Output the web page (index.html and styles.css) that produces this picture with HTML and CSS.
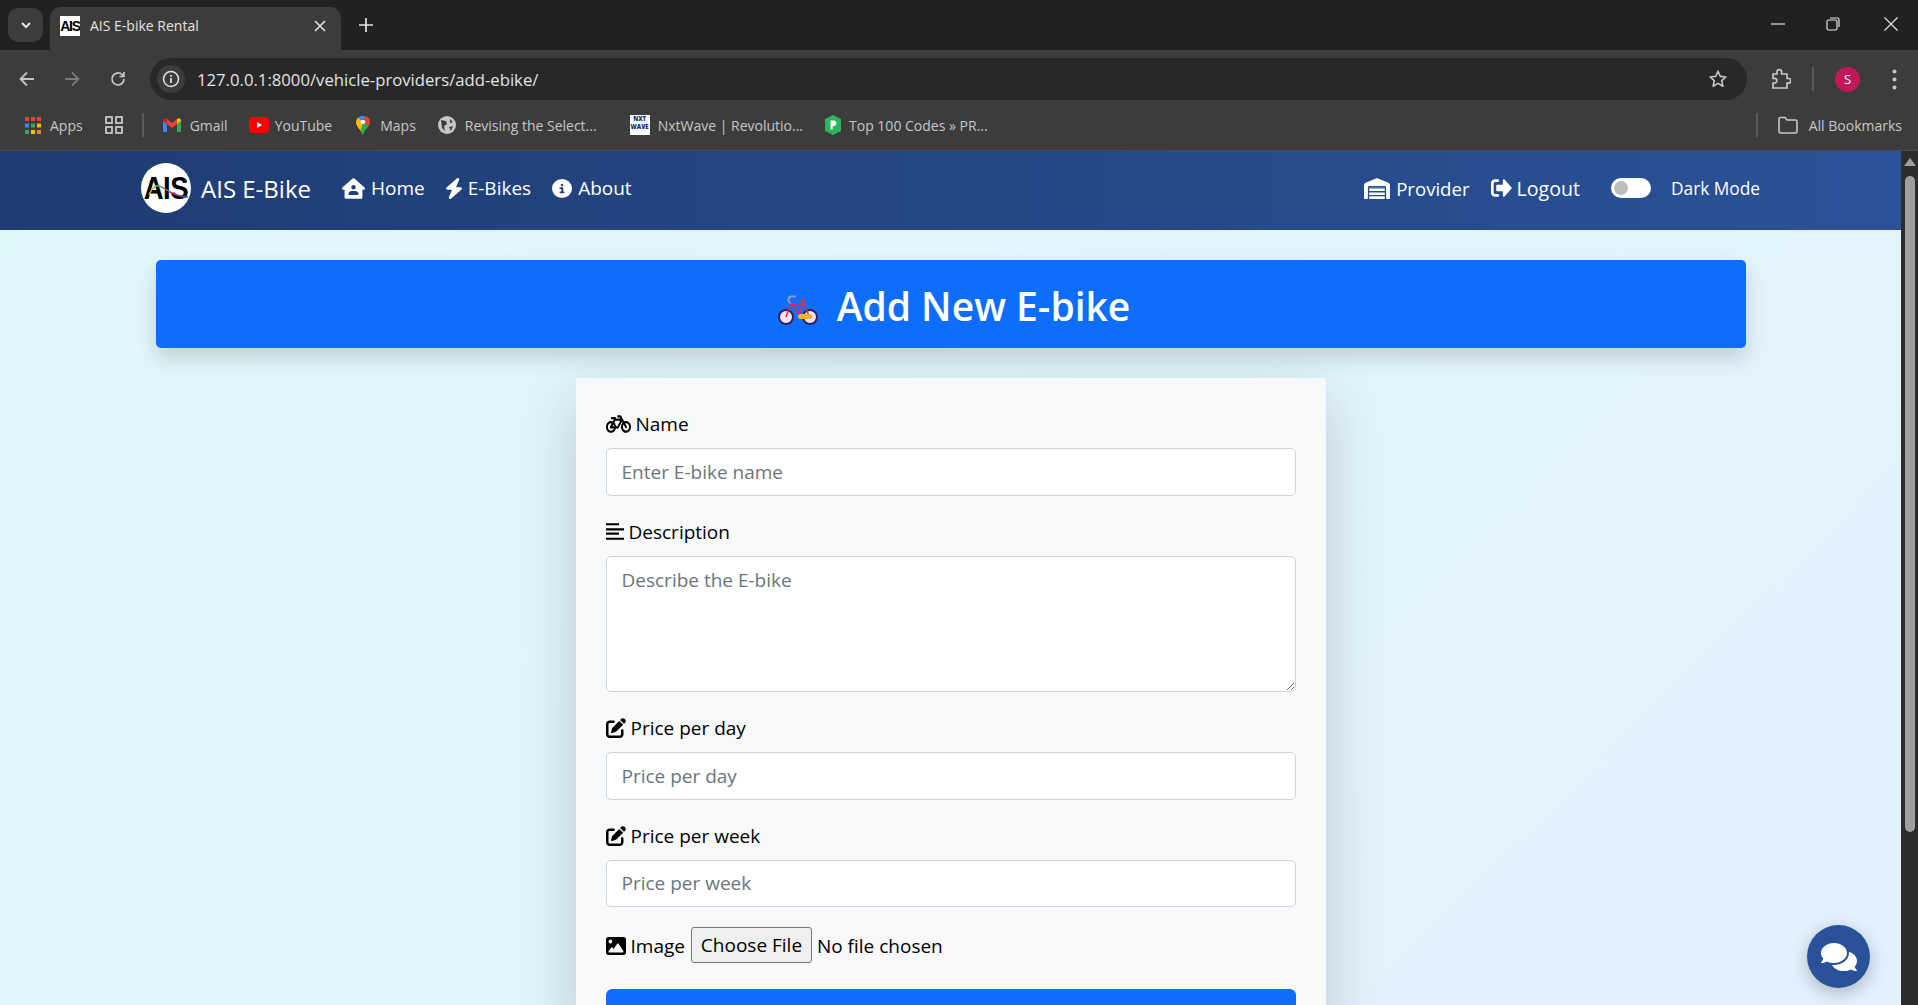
FILE: index.html
```html
<!DOCTYPE html>
<html lang="en">
<head>
    <meta charset="UTF-8">
    <meta name="viewport" content="width=device-width, initial-scale=1.0">
    <title>AIS E-bike Rental</title>
    <link rel="stylesheet" href="styles.css">
</head>
<body>
    <!-- browser chrome -->
    <div class="tabstrip">
        <div class="tab-search"><svg width="14" height="14" viewBox="0 0 14 14"><path d="M3 5l4 4 4-4" fill="none" stroke="#e3e3e3" stroke-width="2"/></svg></div>
        <div class="tab">
            <span class="favicon">AIS</span>
            <span class="tab-title">AIS E-bike Rental</span>
            <svg class="tab-close" width="14" height="14" viewBox="0 0 14 14"><path d="M2 2l10 10M12 2L2 12" stroke="#e3e3e3" stroke-width="1.6"/></svg>
        </div>
        <svg class="tab-new" width="16" height="16" viewBox="0 0 16 16"><path d="M8 1v14M1 8h14" stroke="#e3e3e3" stroke-width="1.7"/></svg>
        <div class="window-btns">
            <svg width="14" height="14" viewBox="0 0 14 14"><path d="M0 7h14" stroke="#e3e3e3" stroke-width="1.2"/></svg>
            <svg width="14" height="14" viewBox="0 0 14 14"><rect x="1" y="3" width="10" height="10" rx="1.5" fill="none" stroke="#e3e3e3" stroke-width="1.2"/><path d="M4 1h7.5A1.5 1.5 0 0 1 13 2.500V10" fill="none" stroke="#e3e3e3" stroke-width="1.2"/></svg>
            <svg class="win-close" width="14" height="14" viewBox="0 0 14 14"><path d="M0.500 0.500l13 13M13.500 0.500l-13 13" stroke="#e3e3e3" stroke-width="1.2"/></svg>
        </div>
    </div>

    <div class="toolbar">
        <svg class="tool-back" width="18" height="18" viewBox="0 0 18 18"><path d="M16 9H3M9 2.500L2.500 9 9 15.500" fill="none" stroke="#c7c7c7" stroke-width="1.8"/></svg>
        <svg class="tool-forward" width="18" height="18" viewBox="0 0 18 18"><path d="M2 9h13M9 2.500L15.500 9 9 15.500" fill="none" stroke="#7a7a7a" stroke-width="1.8"/></svg>
        <svg class="tool-reload" width="18" height="18" viewBox="0 0 18 18"><path d="M15 9a6 6 0 1 1-1.800-4.300L15 6.500M15 2v4.500h-4.500" fill="none" stroke="#c7c7c7" stroke-width="1.7"/></svg>
        <div class="omnibox">
            <div class="site-info"><svg width="18" height="18" viewBox="0 0 18 18"><circle cx="9" cy="9" r="7.500" fill="none" stroke="#e3e3e3" stroke-width="1.500"/><path d="M9 8v5M9 5v1.800" stroke="#e3e3e3" stroke-width="1.700"/></svg></div>
            <span class="url">127.0.0.1:8000/vehicle-providers/add-ebike/</span>
            <svg class="star" width="20" height="20" viewBox="0 0 20 20"><path d="M10 2.200l2.300 5.200 5.600.6-4.200 3.700 1.200 5.500L10 14.400l-4.900 2.800 1.200-5.500L2.100 8l5.600-.6z" fill="none" stroke="#c7c7c7" stroke-width="1.600" stroke-linejoin="round"/></svg>
        </div>
        <svg class="puzzle" width="20" height="22" viewBox="0 0 20 22"><path d="M2 6h4V4a2.300 2.300 0 0 1 4.600 0v2H16v4.500h1.500a2.300 2.300 0 0 1 0 4.600H16V20H2v-5h1.500a2.300 2.300 0 0 0 0-4.600H2z" fill="none" stroke="#c7c7c7" stroke-width="1.700" stroke-linejoin="round"/></svg>
        <span class="tool-sep"></span>
        <span class="avatar">S</span>
        <svg class="dots" width="5" height="21" viewBox="0 0 5 21"><circle cx="2.500" cy="2.500" r="2" fill="#c7c7c7"/><circle cx="2.500" cy="10.500" r="2" fill="#c7c7c7"/><circle cx="2.500" cy="18.500" r="2" fill="#c7c7c7"/></svg>
    </div>

    <div class="bookmarks">
        <a class="bm bm-apps">
            <svg width="16" height="17" viewBox="0 0 16 17">
                <rect width="4" height="4" fill="#ea4335"/><rect x="6" width="4" height="4" fill="#ea4335"/><rect x="12" width="4" height="4" fill="#ea4335"/>
                <rect y="6.500" width="4" height="4" fill="#4285f4"/><rect x="6" y="6.500" width="4" height="4" fill="#34a853"/><rect x="12" y="6.500" width="4" height="4" fill="#fbbc04"/>
                <rect y="13" width="4" height="4" fill="#34a853"/><rect x="6" y="13" width="4" height="4" fill="#fbbc04"/><rect x="12" y="13" width="4" height="4" fill="#ea8600"/>
            </svg>
            Apps
        </a>
        <svg class="bm-tabs" width="18" height="18" viewBox="0 0 18 18" fill="none" stroke="#c7c7c7" stroke-width="1.800"><rect x="1" y="1" width="6" height="6"/><rect x="11" y="1" width="6" height="6"/><rect x="1" y="11" width="6" height="6"/><rect x="11" y="11" width="6" height="6"/></svg>
        <span class="bm-sep"></span>
        <a class="bm bm-gmail">
            <svg width="18" height="16" viewBox="0 0 18 16"><path d="M0 3v11a1 1 0 0 0 1 1h3V6z" fill="#4285f4"/><path d="M18 3v11a1 1 0 0 1-1 1h-3V6z" fill="#34a853"/><path d="M4 7V2L9 6l5-4v5L9 11z" fill="#ea4335"/><path d="M0 3a2 2 0 0 1 3-1.500L4 2v5L0 4z" fill="#c5221f"/><path d="M18 3a2 2 0 0 0-3-1.500L14 2v5l4-3z" fill="#fbbc04"/></svg>
            Gmail
        </a>
        <a class="bm bm-yt">
            <svg width="20" height="16" viewBox="0 0 20 16"><rect width="20" height="16" rx="4" fill="#f00"/><path d="M8 5l5 3-5 3z" fill="#fff"/></svg>
            YouTube
        </a>
        <a class="bm bm-maps">
            <svg width="14" height="19" viewBox="0 0 15 24" preserveAspectRatio="none"><path d="M7.500 24C6 18 0 14 0 7.500A7.500 7.500 0 0 1 2.300 2L7.500 7.500z" fill="#fbbc04"/><path d="M2.300 2A7.500 7.500 0 0 1 10 .4L7.500 7.500z" fill="#4285f4"/><path d="M10 .4A7.500 7.500 0 0 1 15 7.500c0 2-.6 3.600-1.500 5.200L7.500 7.500z" fill="#ea4335"/><path d="M13.500 12.700C11.500 16 8.500 19 7.500 24c-.5-2-1.500-4-2.600-5.600L7.500 7.500z" fill="#34a853"/><circle cx="7.500" cy="7.500" r="2.600" fill="#fff"/></svg>
            Maps
        </a>
        <a class="bm bm-globe">
            <svg width="18" height="18" viewBox="0 0 18 18"><circle cx="9" cy="9" r="9" fill="#c7c7c7"/><path d="M3 4l5 1 1 3-3 2 1 5-3-3zM12 3l3 3-3 1zM11 11l4-1-2 5z" fill="#3c3c3c"/></svg>
            Revising the Select...
        </a>
        <a class="bm bm-nxt">
            <span class="nxt-icon">NXT<br>WAVE</span>
            NxtWave | Revolutio...
        </a>
        <a class="bm bm-top">
            <svg width="18" height="20" viewBox="0 0 18 20"><path d="M9 0l8 4v12l-8 4-8-4V4z" fill="#2cb55d"/><path d="M6.500 5.500h3a2.800 2.800 0 0 1 0 5.600h-.8v3.400H6.500z" fill="#fff"/></svg>
            Top 100 Codes » PR...
        </a>
        <span class="bm-sep bm-sep-right"></span>
        <a class="bm bm-all">
            <svg width="20" height="18" viewBox="0 0 20 18"><path d="M1 3a1.500 1.500 0 0 1 1.500-1.500H7L9 4h8.500A1.500 1.500 0 0 1 19 5.500v10a1.500 1.500 0 0 1-1.500 1.500h-15A1.500 1.500 0 0 1 1 15.500z" fill="none" stroke="#c7c7c7" stroke-width="1.600"/></svg>
            All Bookmarks
        </a>
    </div>

    <!-- page -->
    <div class="viewport">
        <div class="page">
            <nav class="navbar">
                <div class="nav-left">
                    <a class="brand">
                        <span class="logo">
                            <span class="logo-text">AIS</span>
                            <svg class="logo-swoosh" viewBox="0 0 50 50"><path d="M8 32C11 25 14 22 18 23s7 4 11 6 11 5 18 5" fill="none" stroke="url(#swoosh)" stroke-width="1.500"/><defs><linearGradient id="swoosh"><stop offset="0" stop-color="#f5c400"/><stop offset=".3" stop-color="#35a84a"/><stop offset=".6" stop-color="#d5267b"/><stop offset="1" stop-color="#2b5fb8"/></linearGradient></defs></svg>
                        </span>
                        AIS E-Bike
                    </a>
                    <a class="nav-link">
                        <svg class="ico" width="23" height="21" viewBox="0 0 576 512"><path fill-rule="evenodd" fill="#fff" d="M266 8c13-11 31-11 44 0l255 223c8 7 11 15 11 24 0 18-15 33-32 33h-32v184c0 22-18 40-40 40H104c-22 0-40-18-40-40V288H32c-18 0-32-15-32-33 0-9 3-17 10-24zM288 170a56 56 0 1 0 0 112 56 56 0 1 0 0-112zM240 320c-44 0-80 36-80 80 0 9 7 16 16 16h224c9 0 16-7 16-16 0-44-36-80-80-80z"/></svg>
                        Home
                    </a>
                    <a class="nav-link">
                        <svg class="ico" width="16" height="21" viewBox="30 0 388 512" preserveAspectRatio="none"><path fill="#fff" d="M349.400 44.600c5.900-13.700 1.500-29.700-10.600-38.500s-28.600-8.100-39.900 1.800l-256 224c-10 8.800-13.600 22.900-8.900 35.300S50.700 288 64 288H175.500L98.600 467.400c-5.900 13.700-1.500 29.700 10.600 38.500s28.600 8.100 39.900-1.800l256-224c10-8.800 13.600-22.900 8.900-35.300s-16.600-20.700-30-20.700H272.500L349.400 44.600z"/></svg>
                        E-Bikes
                    </a>
                    <a class="nav-link">
                        <svg class="ico" width="20" height="19" viewBox="0 0 512 512" preserveAspectRatio="none"><path fill="#fff" d="M256 512A256 256 0 1 0 256 0a256 256 0 1 0 0 512zM216 336h24V272H216c-13.300 0-24-10.700-24-24s10.700-24 24-24h48c13.300 0 24 10.700 24 24v88h8c13.300 0 24 10.700 24 24s-10.700 24-24 24H216c-13.300 0-24-10.700-24-24s10.700-24 24-24zm40-208a32 32 0 1 1 0 64 32 32 0 1 1 0-64z"/></svg>
                        About
                    </a>
                </div>
                <div class="nav-right">
                    <a class="nav-link nav-provider">
                        <svg class="ico" width="26" height="21" viewBox="0 0 640 512"><path fill="#fff" d="M0 488V171.300c0-26.200 15.900-49.700 40.200-59.400L308.100 4.800c7.600-3.100 16.100-3.100 23.800 0L599.800 111.900c24.300 9.700 40.200 33.300 40.200 59.400V488c0 13.300-10.700 24-24 24H568c-13.300 0-24-10.700-24-24V224c0-17.700-14.300-32-32-32H128c-17.700 0-32 14.300-32 32V488c0 13.300-10.700 24-24 24H24c-13.300 0-24-10.700-24-24zm488 24H152c-13.300 0-24-10.700-24-24V448H512v40c0 13.300-10.700 24-24 24zM128 416V352H512v64H128zm0-96V256H512v64H128zm0-96v-8H512v8H128z"/></svg>
                        Provider
                    </a>
                    <a class="nav-link nav-logout">
                        <svg class="ico" width="21" height="18" viewBox="0 60 512 392" preserveAspectRatio="none"><path fill="#fff" d="M497 273L329 441c-15 15-41 4.500-41-17v-96H152c-13.300 0-24-10.700-24-24v-96c0-13.300 10.700-24 24-24h136V88c0-21.400 25.900-32 41-17l168 168c9.300 9.400 9.300 24.600 0 34zM192 436v-40c0-6.600-5.400-12-12-12H96c-17.700 0-32-14.300-32-32V160c0-17.700 14.300-32 32-32h84c6.600 0 12-5.400 12-12V76c0-6.600-5.400-12-12-12H96c-53 0-96 43-96 96v192c0 53 43 96 96 96h84c6.600 0 12-5.400 12-12z"/></svg>
                        Logout
                    </a>
                    <span class="switch"><span class="knob"></span></span>
                    <span class="nav-link nav-dark">Dark Mode</span>
                </div>
            </nav>

            <h2 class="banner">
                <svg class="banner-bike" width="40" height="30" viewBox="0 0 40 30">
                    <circle cx="8" cy="22" r="7" fill="#f6e6f2" stroke="#3b1d5c" stroke-width="2"/>
                    <circle cx="32" cy="22" r="7" fill="#f6e6f2" stroke="#3b1d5c" stroke-width="2"/>
                    <path d="M8 22L13 8l9 13M13 9L25 9M25 6L21 21M25 6l6 15" fill="none" stroke="#e8264f" stroke-width="1.500"/>
                    <path d="M13 8C9 7 10 2 13 1.500h5" fill="none" stroke="#8f96c8" stroke-width="1.800"/>
                    <rect x="22" y="4" width="6" height="3" rx="1.500" fill="#8a5a44"/>
                    <rect x="20" y="19" width="14" height="5" rx="2.500" fill="#fbb03b"/>
                </svg>
                Add New E-bike
            </h2>

            <form class="ebike-form">
                <div class="field">
                    <label class="field-label">
                        <svg class="ico" width="25" height="18" viewBox="0 60 640 392" preserveAspectRatio="none"><path d="M512.509 192.001c-16.373-.064-32.030 2.955-46.436 8.495l-77.680-125.153A24 24 0 0 0 368.001 64h-64c-8.837 0-16 7.163-16 16v16c0 8.837 7.163 16 16 16h50.649l14.896 24H256.002v-16c0-8.837-7.163-16-16-16h-87.459c-13.441 0-24.777 10.999-24.536 24.437.232 13.044 10.876 23.563 23.995 23.563h48.726l-29.417 47.520c-13.433-4.830-27.904-7.483-42.992-7.520C58.094 191.830.412 249.012.002 319.236-.413 390.279 57.055 448 128.002 448c59.642 0 109.758-40.793 123.967-96h52.033a24 24 0 0 0 20.406-11.367L410.370 201.770l14.938 24.067c-25.455 23.448-41.385 57.081-41.307 94.437.145 68.833 57.899 127.051 126.729 127.719 70.606.685 128.181-55.803 129.255-125.996 1.086-70.941-56.526-129.720-127.476-129.996zM186.750 265.772c9.727 10.529 16.673 23.661 19.642 38.228h-43.306l23.664-38.228zM128.002 400c-44.112 0-80-35.888-80-80s35.888-80 80-80c5.869 0 11.586.653 17.099 1.859l-45.505 73.509C89.715 331.327 101.213 352 120.002 352h81.300c-12.370 28.225-40.562 48-73.300 48zm162.630-96h-35.624c-3.960-31.756-19.556-59.894-42.383-80.026L237.371 184h127.547l-74.286 120zm217.057 95.886c-41.036-2.165-74.049-35.692-75.627-76.755-.812-21.121 6.633-40.518 19.335-55.263l44.433 71.586c4.660 7.508 14.524 9.816 22.032 5.156l13.594-8.437c7.508-4.660 9.817-14.524 5.156-22.032l-44.468-71.643a79.901 79.901 0 0 1 19.858-2.497c44.112 0 80 35.888 80 80-.001 45.540-38.252 82.316-84.313 79.885z"/></svg>
                        Name
                    </label>
                    <input class="form-control" type="text" placeholder="Enter E-bike name">
                </div>
                <div class="field">
                    <label class="field-label">
                        <svg class="ico" width="18" height="17" viewBox="0 0 18 20" preserveAspectRatio="none"><path d="M0 1.500h13M0 7.500h18M0 12.500h13M0 18.500h18" stroke="#000" stroke-width="2.400"/></svg>
                        Description
                    </label>
                    <textarea class="form-control form-area" placeholder="Describe the E-bike"></textarea>
                </div>
                <div class="field">
                    <label class="field-label">
                        <svg class="ico" width="20" height="20" viewBox="0 0 512 512"><path d="M471.600 21.700c-21.900-21.900-57.300-21.900-79.200 0L362.300 51.700l97.900 97.900 30.100-30.100c21.900-21.900 21.900-57.300 0-79.200L471.600 21.700zm-299.200 220c-6.100 6.100-10.800 13.600-13.500 21.900l-29.600 88.800c-2.900 8.600-.6 18.100 5.800 24.600s15.900 8.700 24.600 5.800l88.800-29.600c8.200-2.700 15.700-7.400 21.900-13.500L437.700 172.300 339.700 74.300 172.400 241.700zM96 64C43 64 0 107 0 160V416c0 53 43 96 96 96H352c53 0 96-43 96-96V320c0-17.700-14.300-32-32-32s-32 14.300-32 32v96c0 17.700-14.300 32-32 32H96c-17.700 0-32-14.300-32-32V160c0-17.700 14.300-32 32-32h96c17.700 0 32-14.300 32-32s-14.300-32-32-32H96z"/></svg>
                        Price per day
                    </label>
                    <input class="form-control" type="text" placeholder="Price per day">
                </div>
                <div class="field">
                    <label class="field-label">
                        <svg class="ico" width="20" height="20" viewBox="0 0 512 512"><path d="M471.600 21.700c-21.900-21.900-57.300-21.900-79.200 0L362.300 51.700l97.900 97.900 30.100-30.100c21.900-21.900 21.900-57.300 0-79.200L471.600 21.700zm-299.200 220c-6.100 6.100-10.800 13.600-13.500 21.900l-29.600 88.800c-2.900 8.600-.6 18.100 5.800 24.600s15.900 8.700 24.600 5.800l88.800-29.600c8.200-2.700 15.700-7.400 21.900-13.500L437.700 172.300 339.700 74.300 172.400 241.700zM96 64C43 64 0 107 0 160V416c0 53 43 96 96 96H352c53 0 96-43 96-96V320c0-17.700-14.300-32-32-32s-32 14.300-32 32v96c0 17.700-14.300 32-32 32H96c-17.700 0-32-14.300-32-32V160c0-17.700 14.300-32 32-32h96c17.700 0 32-14.300 32-32s-14.300-32-32-32H96z"/></svg>
                        Price per week
                    </label>
                    <input class="form-control" type="text" placeholder="Price per week">
                </div>
                <div class="file-row">
                    <label class="field-label file-label">
                        <svg class="ico" width="20" height="18" viewBox="0 32 512 448" preserveAspectRatio="none"><path d="M0 96C0 60.700 28.700 32 64 32H448c35.300 0 64 28.700 64 64V416c0 35.300-28.700 64-64 64H64c-35.300 0-64-28.700-64-64V96zM323.800 202.500c-4.500-6.600-11.900-10.500-19.800-10.500s-15.400 3.900-19.800 10.500l-87 127.600L170.700 297c-4.600-5.700-11.500-9-18.700-9s-14.200 3.300-18.700 9l-64 80c-5.800 7.200-6.900 17.100-2.900 25.400s12.400 13.600 21.600 13.600h96 32H424c8.900 0 17.100-4.900 21.200-12.800s3.600-17.400-1.400-24.700l-120-176zM112 192a48 48 0 1 0 0-96 48 48 0 1 0 0 96z"/></svg>
                        Image
                    </label>
                    <span class="file-btn">Choose File</span>
                    <span class="file-name">No file chosen</span>
                </div>
                <button class="submit-btn" type="button"></button>
            </form>

            <div class="chat-btn">
                <svg width="36" height="32" viewBox="0 0 576 512"><path fill="#fff" d="M416 192c0-88.400-93.100-160-208-160S0 103.600 0 192c0 34.300 14.100 65.900 38 92-13.400 30.200-35.500 54.200-35.800 54.500-2.200 2.300-2.800 5.700-1.500 8.700S4.800 352 8 352c36.600 0 66.900-12.300 88.700-25 32.200 15.700 70.300 25 111.300 25 114.900 0 208-71.600 208-160zm122 220c23.900-26 38-57.700 38-92 0-66.900-53.500-124.200-129.300-148.100.9 6.600 1.300 13.300 1.300 20.100 0 105.900-107.700 192-240 192-10.800 0-21.300-.8-31.700-1.900C207.800 439.600 281.800 480 368 480c41 0 79.100-9.200 111.300-25 21.800 12.700 52.100 25 88.700 25 3.200 0 6.100-1.900 7.300-4.800 1.300-2.900.7-6.300-1.500-8.700-.3-.3-22.400-24.200-35.800-54.500z"/></svg>
            </div>
        </div>
        <div class="scrollbar">
            <svg width="12" height="8" viewBox="0 0 12 8"><path d="M6 0l6 8H0z" fill="#a0a0a0"/></svg>
            <span class="scroll-thumb"></span>
        </div>
    </div>
</body>
</html>
```

FILE: styles.css
```css
* {
    box-sizing: border-box;
}

html, body {
    height: 100%;
    margin: 0;
    overflow: hidden;
}

body {
    font-family: "Open Sans", "Noto Sans", sans-serif;
    display: flex;
    flex-direction: column;
    background-color: #3c3c3c;
}

/* browser chrome */
.tabstrip {
    height: 50px;
    flex: none;
    display: flex;
    align-items: flex-end;
    background-color: #202221;
}

.tab-search {
    width: 35px;
    height: 34px;
    margin: 0 7px 8px 8px;
    border-radius: 10px;
    background-color: #3c3c3c;
    display: flex;
    align-items: center;
    justify-content: center;
}

.tab {
    width: 291px;
    height: 43px;
    padding: 0 14px 6px 10px;
    border-radius: 11px 11px 0 0;
    background-color: #3c3c3c;
    display: flex;
    align-items: center;
    color: #e3e3e3;
    font-size: 14px;
}

.favicon {
    width: 20px;
    height: 20px;
    margin-right: 10px;
    background-color: #fff;
    color: #000;
    font-family: "Liberation Sans", sans-serif;
    font-size: 14px;
    font-weight: 700;
    line-height: 20px;
    text-align: center;
    letter-spacing: -1.3px;
    overflow: hidden;
}

.tab-title {
    flex: 1;
}

.tab-new {
    margin: 0 0 17px 17px;
}

.window-btns {
    margin-left: auto;
    height: 50px;
    padding: 0 20px 3px 0;
    display: flex;
    align-items: center;
    gap: 41px;
}

.win-close {
    margin-left: 3px;
}

.toolbar {
    height: 50px;
    flex: none;
    padding-top: 8px;
    display: flex;
    align-items: center;
    background-color: #3c3c3c;
    border-radius: 10px 10px 0 0;
}

.tool-back {
    margin-left: 18px;
}

.tool-forward {
    margin-left: 27px;
}

.tool-reload {
    margin-left: 28px;
}

.omnibox {
    width: 1597px;
    height: 42px;
    margin-left: 23px;
    padding: 0 19px 0 7px;
    border-radius: 21px;
    background-color: #282828;
    display: flex;
    align-items: center;
}

.site-info {
    width: 28px;
    height: 28px;
    border-radius: 50%;
    background-color: #3c3c3c;
    display: flex;
    align-items: center;
    justify-content: center;
}

.url {
    margin-left: 12px;
    padding-top: 1px;
    flex: 1;
    color: #e3e3e3;
    font-size: 16.700px;
}

.puzzle {
    margin-left: 24px;
}

.tool-sep {
    width: 2px;
    height: 24px;
    margin-left: 21px;
    background-color: #5a5a5a;
}

.avatar {
    width: 25px;
    height: 25px;
    margin-left: 21px;
    border-radius: 50%;
    background-color: #c2185b;
    color: #fff;
    font-size: 13px;
    line-height: 25px;
    text-align: center;
}

.dots {
    margin-left: 32px;
}

.bookmarks {
    height: 51px;
    flex: none;
    display: flex;
    align-items: center;
    padding-left: 25px;
    background-color: #3c3c3c;
    border-bottom: 1px solid #4a4a4a;
    color: #c7c7c7;
    font-size: 14px;
}

.bm {
    display: flex;
    align-items: center;
    gap: 9px;
    white-space: nowrap;
}

.bm-tabs {
    margin-left: 22px;
}

.bm-sep {
    width: 2px;
    height: 24px;
    margin-left: 19px;
    background-color: #5a5a5a;
}

.bm-gmail {
    margin-left: 19px;
}

.bm-yt {
    margin-left: 21px;
    gap: 6px;
}

.bm-maps {
    margin-left: 24px;
    gap: 10px;
}

.bm-globe {
    margin-left: 22px;
}

.bm-nxt {
    margin-left: 33px;
    gap: 8px;
}

.nxt-icon {
    width: 20px;
    height: 20px;
    background-color: #fff;
    color: #12306b;
    font-size: 6px;
    font-weight: 800;
    line-height: 8px;
    text-align: center;
    overflow: hidden;
}

.bm-top {
    margin-left: 21px;
    gap: 7px;
}

.bm-sep-right {
    margin-left: auto;
}

.bm-all {
    margin: 0 16px 0 20px;
    gap: 11px;
}

/* page */
.viewport {
    flex: 1;
    min-height: 0;
    display: flex;
}

.page {
    flex: 1;
    min-width: 0;
    position: relative;
    overflow: hidden;
    background: linear-gradient(135deg, #e0f7fa, #e3f2fd);
}

.scrollbar {
    width: 17px;
    flex: none;
    padding-top: 7px;
    display: flex;
    flex-direction: column;
    align-items: center;
    background-color: #2c2c2c;
}

.scroll-thumb {
    width: 10px;
    height: 656px;
    margin-top: 10px;
    border-radius: 5px;
    background-color: #9f9f9f;
}

.navbar {
    height: 79px;
    padding: 0 141px 5px;
    display: flex;
    align-items: center;
    justify-content: space-between;
    background: linear-gradient(90deg, #1e3c72, #2a5298);
    color: #fff;
    font-size: 19px;
}

.nav-left, .nav-right, .brand, .nav-link {
    display: flex;
    align-items: center;
}

.brand {
    gap: 10px;
    font-size: 24px;
}

.logo {
    width: 50px;
    height: 50px;
    border-radius: 50%;
    background-color: #fff;
    position: relative;
    display: flex;
    align-items: center;
    justify-content: center;
    color: #000;
    font-family: "Liberation Sans", sans-serif;
    font-size: 32px;
    font-weight: 700;
}

.logo-text {
    transform: scaleX(0.86);
    letter-spacing: -0.500px;
}

.logo-swoosh {
    position: absolute;
    left: 0;
    top: 0;
    width: 50px;
    height: 50px;
}

.nav-link {
    gap: 6px;
    white-space: nowrap;
}

.nav-left .brand {
    margin-right: 31px;
}

.nav-left .nav-link {
    margin-right: 21px;
}

.nav-provider {
    margin-right: 21px;
    font-size: 18.600px;
}

.nav-logout {
    margin-right: 31px;
    gap: 5px;
    font-size: 19.600px;
}

.nav-dark {
    font-size: 17.300px;
}

.switch {
    width: 40px;
    height: 20px;
    margin-right: 20px;
    padding: 3px;
    border-radius: 10px;
    background-color: #fff;
}

.knob {
    display: block;
    width: 14px;
    height: 14px;
    border-radius: 50%;
    background-color: #bdbdbd;
}

.banner {
    height: 88px;
    margin: 30px 155px 30px 156px;
    padding: 2px 0 0 6px;
    border-radius: 5px;
    display: flex;
    align-items: center;
    justify-content: center;
    gap: 19px;
    background-color: #0d6efd;
    color: #fff;
    font-size: 39px;
    font-weight: 600;
    box-shadow: 0 10px 20px rgba(0, 0, 0, 0.15);
}

.banner-bike {
    margin-top: 10px;
}

.ebike-form {
    width: 750px;
    margin: 0 auto;
    padding: 30px 30px 0;
    border-radius: 3px;
    background-color: #f8f9fa;
    box-shadow: 0 20px 60px rgba(0, 0, 0, 0.175);
}

.field {
    margin-bottom: 20px;
}

.field-label {
    display: flex;
    align-items: center;
    gap: 5px;
    height: 30px;
    margin-bottom: 10px;
    padding-top: 2px;
    color: #000;
    font-size: 19px;
}

.form-control {
    display: block;
    width: 100%;
    height: 47.500px;
    padding: 0 15px;
    border: 1px solid #ced4da;
    border-radius: 5px;
    background-color: #fff;
    font-family: inherit;
    font-size: 19px;
}

.form-control::placeholder {
    color: #6c757d;
}

.form-area {
    height: 136.500px;
    padding-top: 10px;
}

.file-row {
    height: 36px;
    margin: 0 0 26px;
    display: flex;
    align-items: center;
    color: #000;
    font-size: 19px;
}

.file-label {
    margin: 0 6px 0 0;
}

.file-btn {
    width: 121px;
    height: 36px;
    border: 1px solid #767676;
    border-radius: 3px;
    background-color: #efefef;
    line-height: 35px;
    text-align: center;
}

.file-name {
    margin: 2px 0 0 5px;
}

.submit-btn {
    display: block;
    width: 100%;
    height: 47px;
    border: 0;
    border-radius: 6px;
    background-color: #0d6efd;
}

.chat-btn {
    position: absolute;
    left: 1807px;
    top: 774px;
    width: 63px;
    height: 63px;
    border-radius: 50%;
    background-color: #2a5298;
    display: flex;
    align-items: center;
    justify-content: center;
    box-shadow: 0 5px 18px rgba(0, 0, 0, 0.25);
}
```
